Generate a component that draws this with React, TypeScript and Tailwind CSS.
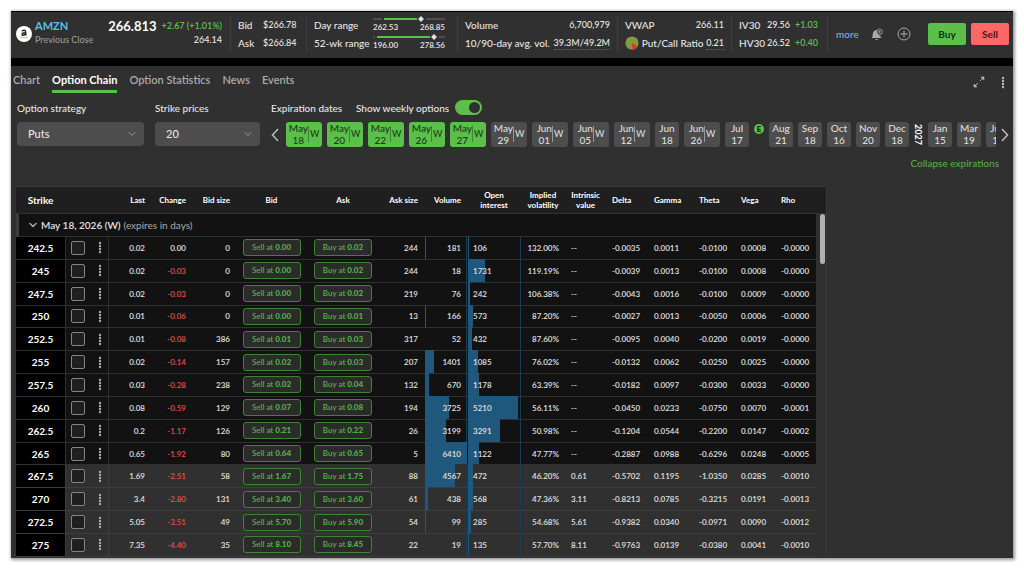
import { ChevronDown } from 'lucide-react';
import clsx from 'clsx';

const TABS = ['Chart', 'Option Chain', 'Option Statistics', 'News', 'Events'];

type Expiration = { month: string; day: string; weekly?: boolean; active?: boolean };

const EXPIRATIONS_2026: Expiration[] = [
  { month: 'May', day: '18', weekly: true, active: true },
  { month: 'May', day: '20', weekly: true, active: true },
  { month: 'May', day: '22', weekly: true, active: true },
  { month: 'May', day: '26', weekly: true, active: true },
  { month: 'May', day: '27', weekly: true, active: true },
  { month: 'May', day: '29', weekly: true },
  { month: 'Jun', day: '01', weekly: true },
  { month: 'Jun', day: '05', weekly: true },
  { month: 'Jun', day: '12', weekly: true },
  { month: 'Jun', day: '18' },
  { month: 'Jun', day: '26', weekly: true },
  { month: 'Jul', day: '17' }
];

const EXPIRATIONS_AFTER_EARNINGS: Expiration[] = [
  { month: 'Aug', day: '21' },
  { month: 'Sep', day: '18' },
  { month: 'Oct', day: '16' },
  { month: 'Nov', day: '20' },
  { month: 'Dec', day: '18' }
];

const EXPIRATIONS_2027: Expiration[] = [
  { month: 'Jan', day: '15' },
  { month: 'Mar', day: '19' },
  { month: 'Jun', day: '17' }
];

// strike, last, change, bid size, bid, ask, ask size, volume, open interest, IV, intrinsic, delta, gamma, theta, vega, rho
const ROWS = [
  ['242.5', '0.02', '0.00', '0', '0.00', '0.02', '244', '181', '106', '132.00%', '--', '-0.0035', '0.0011', '-0.0100', '0.0008', '-0.0000'],
  ['245', '0.02', '-0.03', '0', '0.00', '0.02', '244', '18', '1731', '119.19%', '--', '-0.0039', '0.0013', '-0.0100', '0.0008', '-0.0000'],
  ['247.5', '0.02', '-0.03', '0', '0.00', '0.02', '219', '76', '242', '106.38%', '--', '-0.0043', '0.0016', '-0.0100', '0.0009', '-0.0000'],
  ['250', '0.01', '-0.06', '0', '0.00', '0.01', '13', '166', '573', '87.20%', '--', '-0.0027', '0.0013', '-0.0050', '0.0006', '-0.0000'],
  ['252.5', '0.01', '-0.08', '386', '0.01', '0.03', '317', '52', '432', '87.60%', '--', '-0.0095', '0.0040', '-0.0200', '0.0019', '-0.0000'],
  ['255', '0.02', '-0.14', '157', '0.02', '0.03', '207', '1401', '1085', '76.02%', '--', '-0.0132', '0.0062', '-0.0250', '0.0025', '-0.0000'],
  ['257.5', '0.03', '-0.28', '238', '0.02', '0.04', '132', '670', '1178', '63.39%', '--', '-0.0182', '0.0097', '-0.0300', '0.0033', '-0.0000'],
  ['260', '0.08', '-0.59', '129', '0.07', '0.08', '194', '3725', '5210', '56.11%', '--', '-0.0450', '0.0233', '-0.0750', '0.0070', '-0.0001'],
  ['262.5', '0.2', '-1.17', '126', '0.21', '0.22', '26', '3199', '3291', '50.98%', '--', '-0.1204', '0.0544', '-0.2200', '0.0147', '-0.0002'],
  ['265', '0.65', '-1.92', '80', '0.64', '0.65', '5', '6410', '1122', '47.77%', '--', '-0.2887', '0.0988', '-0.6296', '0.0248', '-0.0005'],
  ['267.5', '1.69', '-2.51', '58', '1.67', '1.75', '88', '4567', '472', '46.20%', '0.61', '-0.5702', '0.1195', '-1.0350', '0.0285', '-0.0010'],
  ['270', '3.4', '-2.80', '131', '3.40', '3.60', '61', '438', '568', '47.36%', '3.11', '-0.8213', '0.0785', '-0.3215', '0.0191', '-0.0013'],
  ['272.5', '5.05', '-3.51', '49', '5.70', '5.90', '54', '99', '285', '54.68%', '5.61', '-0.9382', '0.0340', '-0.0971', '0.0090', '-0.0012'],
  ['275', '7.35', '-4.40', '35', '8.10', '8.45', '22', '19', '135', '57.70%', '8.11', '-0.9763', '0.0139', '-0.0380', '0.0041', '-0.0010']
];

const UNDERLYING = 266.813;
const MAX_VOLUME = Math.max(...ROWS.map((row) => Number(row[7])));
const MAX_INTEREST = Math.max(...ROWS.map((row) => Number(row[8])));

const Dots = ({ className }: { className: string }) => (
  <svg viewBox="0 0 4 13" className={className} fill="currentColor" aria-hidden="true">
    <circle cx="2" cy="2" r="1.2" />
    <circle cx="2" cy="5" r="1.2" />
    <circle cx="2" cy="8" r="1.2" />
    <circle cx="2" cy="11" r="1.2" />
  </svg>
);

const Divider = () => <div className="h-9 w-px shrink-0 bg-[#3f3f3f]" />;

const RangeBar = ({ low, high, from, to }: { low: string; high: string; from: number; to: number }) => (
  <div className="w-18">
    <svg viewBox="0 0 72 6" className="block h-1.5 w-full" aria-hidden="true">
      <rect x="0" y="2" width="72" height="2" fill="#4f4f4f" />
      <rect x={from - 2} y="2" width={to - from + 7} height="2" fill="#303030" />
      <rect x={from} y="2" width={to - from - 4} height="2" fill="#5ac04a" />
      <path d={`M${to} 0 l3 3 l-3 3 l-3 -3z`} fill="#e0e0e0" />
    </svg>
    <div className="flex justify-between text-[8px] leading-[10px] font-semibold">
      <span>{low}</span>
      <span>{high}</span>
    </div>
  </div>
);

const ExpirationButton = ({ month, day, weekly, active }: Expiration) => (
  <button
    className={clsx(
      'flex h-[25px] shrink-0 items-center justify-center rounded-[3px] pb-0.5 text-[10px] leading-3 font-medium',
      weekly ? 'w-9' : 'w-6',
      active ? 'bg-[#5ac04a] text-[#1c3a18]' : 'bg-[#4d4d4d] text-[#ddd]'
    )}
  >
    <span>
      {month}
      <br />
      {day}
    </span>
    {weekly && (
      <span className={clsx('flex h-4 items-center border-l pl-px text-[9px]', active ? 'border-[#3c8431]' : 'border-[#999]')}>
        W
      </span>
    )}
  </button>
);

const QuoteHeader = () => (
  <header className="flex h-[47px] items-center border-t border-black bg-[#303030] pr-1 pb-0.5 pl-[5px] text-[10px] leading-[18px] font-medium whitespace-nowrap text-[#e6e6e6]">
    <svg viewBox="0 0 16 16" className="mr-[3px] h-4 w-4 shrink-0" role="img" aria-label="Amazon">
      <circle cx="8" cy="8" r="8" fill="#fff" />
      <path d="M6 5.4Q6.4 4.2 8 4.2T9.7 5.8V8.4L10.3 9.2M9.6 6.7Q6.1 6.6 6.1 8.1T7.4 9.3T9.6 7.8" fill="none" stroke="#222" strokeWidth="1.4" />
      <path d="M4 11Q8 13.2 12 10.9" fill="none" stroke="#f2a95c" strokeWidth="0.9" />
    </svg>
    <div className="mr-2 w-[187px] shrink-0 pb-1">
      <div className="flex h-4 items-center">
        <a href="#amzn" className="flex-1 text-[11px] font-bold text-[#5bbfea]">AMZN</a>
        <span className="mr-[5px] text-[13px] font-bold text-white">266.813</span>
        <span className="text-[9px] font-semibold text-[#5ac04a]">+2.67 (+1.01%)</span>
      </div>
      <div className="flex h-3 items-center justify-between text-[9px]">
        <span className="text-[#999]">Previous Close</span>
        <span>264.14</span>
      </div>
    </div>
    <Divider />
    <div className="grid w-[75px] shrink-0 grid-cols-[25px_1fr] pl-[7px]">
      <span>Bid</span>
      <span className="text-[9px]">$266.78</span>
      <span>Ask</span>
      <span className="text-[9px]">$266.84</span>
    </div>
    <Divider />
    <div className="grid w-[150px] shrink-0 grid-cols-[59px_1fr] pl-[7px]">
      <span>Day range</span>
      <RangeBar low="262.53" high="268.85" from={11} to={48} />
      <span>52-wk range</span>
      <RangeBar low="196.00" high="278.56" from={4} to={61} />
    </div>
    <Divider />
    <div className="w-[159px] shrink-0 px-[7px]">
      <div className="flex justify-between">
        <span>Volume</span>
        <span className="text-[9px]">6,700,979</span>
      </div>
      <div className="flex items-center justify-between">
        <span>10/90-day avg. vol.</span>
        <span className="border-b border-dotted border-[#3f8435] text-[9px] leading-3">39.3M/49.2M</span>
      </div>
    </div>
    <Divider />
    <div className="w-[113px] shrink-0 px-[7px]">
      <div className="flex justify-between">
        <span>VWAP</span>
        <span className="text-[9px]">266.11</span>
      </div>
      <div className="flex items-center justify-between">
        <svg viewBox="0 0 14 14" className="h-3.5 w-3.5 shrink-0" aria-hidden="true">
          <circle cx="7" cy="7" r="6.6" fill="#829a3c" />
          <path d="M7 7L12.6 10.4A6.6 6.6 0 0 1 7 13.6Z" fill="#d83a2e" />
        </svg>
        <span>Put/Call Ratio</span>
        <span className="border-b border-dotted border-[#3f8435] text-[9px] leading-3">0.21</span>
      </div>
    </div>
    <Divider />
    <div className="grid w-[95px] shrink-0 grid-cols-[28px_28px_1fr] pl-[7px]">
      <span>IV30</span>
      <span className="text-[9px]">29.56</span>
      <span className="text-[9px] font-semibold text-[#5ac04a]">+1.03</span>
      <span>HV30</span>
      <span className="text-[9px]">26.52</span>
      <span className="text-[9px] font-semibold text-[#5ac04a]">+0.40</span>
    </div>
    <Divider />
    <div className="ml-2 flex flex-1 items-center">
      <a href="#more" className="text-[#5bbfea]">more</a>
      <button className="ml-auto" aria-label="Add alert">
        <svg viewBox="0 0 12 13" className="h-[13px] w-3" aria-hidden="true">
          <path d="M0.5 10C2 8.8 1.6 6.8 2 5Q2.8 2 6 2L7 6.5L9.4 8Q9.6 9.4 10.8 10Z" fill="#aaa" />
          <path d="M4 11H7.4Q5.6 13 4 11Z" fill="#aaa" />
          <circle cx="8.6" cy="3.8" r="2.8" fill="#303030" stroke="#aaa" strokeWidth="0.8" />
          <path d="M8.6 2.4V5.2M7.2 3.8H10" stroke="#aaa" strokeWidth="0.8" />
        </svg>
      </button>
      <button className="mr-[17px] ml-3.5" aria-label="Add to watchlist">
        <svg viewBox="0 0 14 14" className="h-3.5 w-3.5" fill="none" stroke="#aaa" aria-hidden="true">
          <circle cx="7" cy="7" r="6" />
          <path d="M7 3.5V10.5M3.5 7H10.5" />
        </svg>
      </button>
      <button className="mr-[5px] h-[22px] w-[38px] rounded-[2px] bg-[#5ac04a] font-bold text-[#153012]">Buy</button>
      <button className="h-[22px] w-[38px] rounded-[2px] bg-[#ff6666] font-bold text-[#4a1212]">Sell</button>
    </div>
  </header>
);

const TabBar = () => (
  <div className="flex h-7 items-center justify-between pr-2 pl-0.5">
    <nav className="flex gap-3 text-[11px]">
      {TABS.map((tab) => (
        <a
          key={tab}
          href="#tab"
          className={clsx(
            'border-b-[3px] pt-0.5 leading-5',
            tab === 'Option Chain' ? 'border-[#5ac04a] font-bold text-white' : 'border-transparent font-semibold text-[#aaa]'
          )}
        >
          {tab}
        </a>
      ))}
    </nav>
    <div className="flex items-center gap-4 pt-1 text-[#bbb]">
      <button aria-label="Expand">
        <svg viewBox="0 0 12 12" className="h-3 w-3" stroke="currentColor" fill="currentColor" aria-hidden="true">
          <path d="M8 1H11V4ZM1 8V11H4Z" strokeWidth="0.6" />
          <path d="M10 2L7.2 4.8M2 10L4.8 7.2" fill="none" />
        </svg>
      </button>
      <button aria-label="More actions">
        <Dots className="h-[13px] w-1" />
      </button>
    </div>
  </div>
);

const Filters = () => (
  <section className="flex pt-[3px] pl-1.5 text-[10px] font-medium text-[#e6e6e6]">
    <div className="mr-[11px] w-[127px] shrink-0">
      <label htmlFor="strategy" className="block h-[25px] leading-[22px]">Option strategy</label>
      <div className="relative">
        <select id="strategy" className="h-6 w-full appearance-none rounded bg-[#4d4d4d] pl-[11px] text-[11px]">
          <option>Puts</option>
        </select>
        <ChevronDown className="pointer-events-none absolute top-1.5 right-1.5 h-3 w-3 text-[#999]" />
      </div>
    </div>
    <div className="mr-2 w-[105px] shrink-0">
      <label htmlFor="strikes" className="block h-[25px] leading-[22px]">Strike prices</label>
      <div className="relative">
        <select id="strikes" className="h-6 w-full appearance-none rounded bg-[#4d4d4d] pl-[11px] text-[11px]">
          <option>20</option>
        </select>
        <ChevronDown className="pointer-events-none absolute top-1.5 right-1.5 h-3 w-3 text-[#999]" />
      </div>
    </div>
    <div className="min-w-0 flex-1">
      <div className="flex h-[25px] items-start pl-[3px] leading-[22px]">
        <span className="w-[85px]">Expiration dates</span>
        <label htmlFor="weekly" className="mr-1.5">Show weekly options</label>
        <input
          id="weekly"
          type="checkbox"
          role="switch"
          defaultChecked
          className="mt-[3px] h-[15px] w-[27px] appearance-none rounded-full bg-[#5ac04a] before:mt-0.5 before:ml-3.5 before:block before:h-[11px] before:w-[11px] before:rounded-full before:bg-[#303030]"
        />
      </div>
      <div className="flex items-center pr-0.5">
        <button className="w-[18px] shrink-0 pl-[3px]" aria-label="Earlier expirations">
          <svg viewBox="0 0 8 14" className="h-3.5 w-2" fill="none" stroke="#bbb" strokeWidth="1.5" aria-hidden="true">
            <path d="M7 1L1.5 7L7 13" />
          </svg>
        </button>
        <div className="flex flex-1 items-center gap-[5px] overflow-hidden">
          {EXPIRATIONS_2026.map((item) => (
            <ExpirationButton key={item.month + item.day} {...item} />
          ))}
          <span className="mt-0.5 flex h-2.5 w-2.5 shrink-0 items-center justify-center self-start rounded-full bg-[#5ac04a] text-[8px] font-bold text-black">
            E
          </span>
          {EXPIRATIONS_AFTER_EARNINGS.map((item) => (
            <ExpirationButton key={item.month + item.day} {...item} />
          ))}
          <span className="w-[9px] shrink-0 text-[9px] leading-[9px] font-bold text-white [writing-mode:vertical-rl]">2027</span>
          {EXPIRATIONS_2027.map((item) => (
            <ExpirationButton key={item.month + item.day} {...item} />
          ))}
        </div>
        <button className="w-[15px] shrink-0 pl-[5px]" aria-label="Later expirations">
          <svg viewBox="0 0 8 14" className="h-3.5 w-2" fill="none" stroke="#bbb" strokeWidth="1.5" aria-hidden="true">
            <path d="M1 1L6.5 7L1 13" />
          </svg>
        </button>
      </div>
      <div className="mt-2.5 flex justify-end pr-3.5">
        <button className="leading-3 text-[#55ad45]">Collapse expirations</button>
      </div>
    </div>
  </section>
);

const COLUMN_WIDTHS = [
  'w-[49px]', 'w-[44px]', 'w-[42px]', 'w-[41px]', 'w-[44px]', 'w-[71px]', 'w-[72px]', 'w-[45px]', 'w-[43px]',
  'w-[54px]', 'w-[44px]', 'w-[41px]', 'w-[42px]', 'w-[45px]', 'w-[42px]', 'w-[40px]', 'w-[41px]', 'w-[10px]'
];

const OrderButton = ({ side, price }: { side: string; price: string }) => (
  <button className="mx-auto block h-[17px] w-[58px] rounded-[3px] border border-[#3f8435] bg-[#2b2b2b] text-[8px] leading-[15px] text-[#55b046]">
    {side} at <b>{price}</b>
  </button>
);

const Bar = ({ value, max, size }: { value: string; max: number; size: number }) => (
  <span
    className="absolute -top-px bottom-0 left-px bg-[#1f587c]"
    style={{ width: Math.round((Number(value) / max) * size) }}
  />
);

const ChainTable = () => (
  <table className="ml-[5px] h-[371px] w-[810px] table-fixed border-separate border-spacing-0 border-t border-r border-[#3a3a3a] text-[8px] leading-[10px] font-semibold text-[#e0e0e0]">
    <colgroup>
      {COLUMN_WIDTHS.map((width, index) => (
        <col key={index} className={width} />
      ))}
    </colgroup>
    <thead>
      <tr className="h-[27px] bg-[#1f1f1f] text-white [&>th]:border-b [&>th]:border-[#333] [&>th]:font-bold">
        <th className="text-[10px]">Strike</th>
        <th />
        <th className="pr-1.5 text-right">Last</th>
        <th className="pr-1.5 text-right">Change</th>
        <th className="pr-1.5 text-right">Bid size</th>
        <th>Bid</th>
        <th>Ask</th>
        <th className="pr-1.5 text-right whitespace-nowrap">Ask size</th>
        <th className="pr-1.5 text-right">Volume</th>
        <th>
          Open
          <br />
          interest
        </th>
        <th>Implied volatility</th>
        <th>Intrinsic value</th>
        <th className="pl-1.5 text-left">Delta</th>
        <th className="pl-1.5 text-left">Gamma</th>
        <th className="pl-1.5 text-left">Theta</th>
        <th className="pl-1.5 text-left">Vega</th>
        <th className="pl-1.5 text-left">Rho</th>
        <th />
      </tr>
    </thead>
    <tbody>
      <tr className="h-[23px]">
        <td colSpan={17} className="border-b border-l-[3px] border-b-[#303030] border-l-[#3d3d3d] bg-[#121212] pl-2">
          <button className="flex items-center text-[10px] leading-3">
            <ChevronDown className="mr-0.5 h-3 w-3 text-[#aaa]" strokeWidth={3} />
            <span className="mr-[3px] font-semibold">May 18, 2026 (W)</span>
            <span className="font-normal text-[#aaa]">(expires in days)</span>
          </button>
        </td>
        <td rowSpan={15} className="bg-[#303030] align-top">
          <div className="ml-1 h-[50px] w-[5px] rounded-full bg-[#b0b0b0]" />
        </td>
      </tr>
      {ROWS.map((row) => {
        const inTheMoney = Number(row[0]) > UNDERLYING;
        return (
          <tr
            key={row[0]}
            className={clsx(
              '[&>td]:border-b',
              inTheMoney ? 'bg-[#303030] [&>td]:border-[#3d3d3d]' : 'bg-[#121212] [&>td]:border-[#303030]'
            )}
          >
            <td className="bg-black text-center text-[10px] font-bold text-white">{row[0]}</td>
            <td className="border-x">
              <div className="flex items-center gap-[13px] pl-[5px]">
                <input
                  type="checkbox"
                  aria-label={`Select ${row[0]}`}
                  className="h-3.5 w-3.5 appearance-none rounded-[2px] border border-[#858585] bg-[#1f1f1f]"
                />
                <button aria-label={`Actions for ${row[0]}`}>
                  <Dots className="h-[13px] w-1 text-[#aaa]" />
                </button>
              </div>
            </td>
            <td className="pr-1.5 text-right">{row[1]}</td>
            <td className={clsx('pr-1.5 text-right', Number(row[2]) < 0 && 'text-[#e05050]')}>{row[2]}</td>
            <td className="pr-1.5 text-right">{row[3]}</td>
            <td>
              <OrderButton side="Sell" price={row[4]} />
            </td>
            <td>
              <OrderButton side="Buy" price={row[5]} />
            </td>
            <td className="pr-1.5 text-right">{row[6]}</td>
            <td className="relative border-r border-r-[#1a3c50]! pr-[5px] text-right">
              <Bar value={row[7]} max={MAX_VOLUME} size={42} />
              <span className="relative">{row[7]}</span>
            </td>
            <td className="relative border-r border-r-[#1a3c50]! pl-1.5">
              <Bar value={row[8]} max={MAX_INTEREST} size={50} />
              <span className="relative">{row[8]}</span>
            </td>
            <td className="pr-1.5 text-right">{row[9]}</td>
            {row.slice(10).map((value, index) => (
              <td key={index} className="pl-1.5">
                {value}
              </td>
            ))}
          </tr>
        );
      })}
    </tbody>
  </table>
);

export default function App() {
  return (
    <div className="min-h-screen bg-white px-[11px] pt-[11px] pb-[11px] font-[Lato,sans-serif]">
      <main className="bg-[#303030] pb-px shadow-[1px_1px_3px_1px_#0006]">
        <QuoteHeader />
        <div className="h-2 bg-black" />
        <TabBar />
        <Filters />
        <div className="mt-[17px] overflow-hidden">
          <ChainTable />
        </div>
      </main>
    </div>
  );
}
